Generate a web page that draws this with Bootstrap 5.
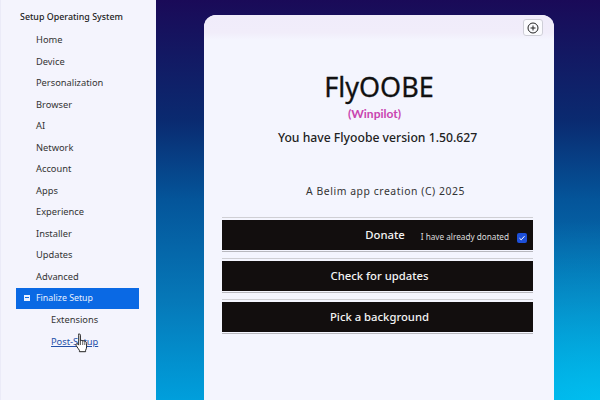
<!DOCTYPE html>
<html lang="en">
<head>
    <meta charset="UTF-8">
    <meta name="viewport" content="width=device-width, initial-scale=1.0">
    <title>FlyOOBE</title>
    <link href="https://cdn.jsdelivr.net/npm/bootstrap@5.3.0/dist/css/bootstrap.min.css" rel="stylesheet">
    <style>
    html, body {
        height: 400px;
        overflow: hidden;
    }
    body {
        font-family: "Noto Sans", "Open Sans", sans-serif;
        background: #f4f4fd;
    }
    .app-shell {
        height: 400px;
    }
    .side-pane {
        width: 156px;
        background: #f4f4fd;
        padding: 10px 0 0 5px;
        border-left: 1px solid #ebebf8;
        font-size: 9.3px;
        color: #333;
    }
    .side-title {
        height: 13px;
        line-height: 13px;
        margin: 0 0 6px 14px;
        font-size: 8.9px;
        font-weight: 500;
        color: #222;
    }
    .side-item {
        height: 21.55px;
        line-height: 21.55px;
        padding-left: 30px;
        color: #333;
    }
    .side-active {
        width: 123px;
        margin-left: 10px;
        padding-left: 20px;
        height: 21px;
        line-height: 20px;
        font-size: 8.8px;
        background: #0a69e4;
        color: #e8f0ff;
        position: relative;
    }
    .side-minus {
        position: absolute;
        left: 8px;
        top: 7px;
        width: 6px;
        height: 6px;
        background: #e8f0ff;
    }
    .side-minus::after {
        content: "";
        position: absolute;
        left: 1px;
        right: 1px;
        top: 2px;
        height: 1px;
        background: #0a69e4;
    }
    .side-sub {
        padding-left: 45px;
        margin-top: 0.5px;
    }
    .side-link {
        color: #2450a8;
        text-decoration: underline;
    }
    .hand-cursor {
        position: absolute;
        left: 75px;
        top: 333px;
    }
    .wall {
        background:
            radial-gradient(ellipse 70% 45% at 100% 100%, rgba(0, 215, 255, .55), rgba(0, 215, 255, 0)),
            linear-gradient(180deg, #1a0a58 0%, #0a2a70 30%, #04559a 50%, #0678b8 75%, #009fdc 100%);
        padding: 15px 46px 0 48px;
    }
    .about-card {
        height: 400px;
        background: #f4f5fe;
        border-radius: 12px 12px 0 0;
        border: 0;
        position: relative;
        overflow: hidden;
    }
    .about-head {
        height: 25px;
        background: linear-gradient(180deg, #f0ecfa 0%, #f1edfa 70%, #f4f5fe 100%);
    }
    .plus-btn {
        position: absolute;
        top: 4px;
        right: 11px;
        width: 20px;
        height: 17px;
        background: #fbfbfe;
        border: 1px solid #cfcfd8;
        border-radius: 3px;
    }
    .app-name {
        font-size: 27px;
        line-height: 32px;
        margin: 31px 0 0;
        font-weight: 400;
        color: #111;
        -webkit-text-stroke: 0.3px #111;
    }
    .app-tag {
        font-family: "Lato", sans-serif;
        font-size: 12px;
        line-height: 16px;
        margin: 3px 9px 0 0;
        color: #c944b0;
        font-weight: 700;
    }
    .app-version {
        font-size: 12.200px;
        line-height: 16px;
        margin: 8px 3px 0 0;
        font-weight: 500;
        color: #222;
    }
    .app-credit {
        font-size: 10.400px;
        letter-spacing: 0.55px;
        line-height: 14px;
        margin: 38px 0 0 13px;
        color: #333;
    }
    .action-stack {
        margin: 19px 21px 0 18px;
    }
    .action-bar {
        position: relative;
        display: block;
        width: 100%;
        height: 35px;
        margin-bottom: 6px;
        padding: 2px 0 1px;
        border-top: 1px solid #cfcfd4;
        border-bottom: 1px solid #b8b8be;
        border-left: 0;
        border-right: 0;
        border-radius: 0;
        background: #f4f5fe;
        color: #f4f4f4;
        font-size: 11.300px;
        font-weight: 500;
    }
    .action-fill {
        display: block;
        height: 100%;
        line-height: 29px;
        padding-left: 4px;
        background: #120e0e;
    }
    .donate-label {
        margin-left: 11px;
    }
    .donate-side {
        position: absolute;
        right: 6px;
        top: 5px;
        height: 29px;
        font-size: 8.200px;
        font-weight: 400;
        color: #ddd;
    }
    .check-tick {
        width: 10px;
        height: 10px;
        background: #1d4fd8;
        border-radius: 2px;
    }
    </style>
</head>
<body>
    <div class="app-shell d-flex">
        <div class="side-pane flex-shrink-0">
            <div class="side-title">Setup Operating System</div>
            <div class="side-item">Home</div>
            <div class="side-item">Device</div>
            <div class="side-item">Personalization</div>
            <div class="side-item">Browser</div>
            <div class="side-item">AI</div>
            <div class="side-item">Network</div>
            <div class="side-item">Account</div>
            <div class="side-item">Apps</div>
            <div class="side-item">Experience</div>
            <div class="side-item">Installer</div>
            <div class="side-item">Updates</div>
            <div class="side-item">Advanced</div>
            <div class="side-active"><span class="side-minus"></span>Finalize Setup</div>
            <div class="side-item side-sub">Extensions</div>
            <div class="side-item side-sub"><span class="side-link">Post-Setup</span></div>
        </div>
        <svg class="hand-cursor" width="13" height="20" viewBox="0 0 13 20">
            <path d="M3.5 1.2c.9-.6 1.9 0 1.9 1v5.6l1.2-.4 1.3.3 1.2.2 1.3.6c.9.4 1.2 1 1.2 2v3.4c0 1.5-.5 2.3-1 3.4v1.4H4.400v-1.400c-.8-1.300-2-2.700-3.100-4.500-.5-.9-.4-1.700.3-2 .7-.2 1.200.2 2.100 1.300V2.200c0-.4 0-.8.300-1z" fill="#fff" stroke="#222" stroke-width="1"/>
            <path d="M5.500 8v4M7.700 8v4M9.800 8.500V12" stroke="#222" stroke-width=".7" fill="none"/>
        </svg>
        <div class="wall flex-grow-1">
            <div class="about-card text-center">
                <div class="about-head"></div>
                <button type="button" class="plus-btn d-flex align-items-center justify-content-center p-0" aria-label="Expand">
                    <svg width="12" height="12" viewBox="0 0 12 12">
                        <circle cx="6" cy="6" r="5" fill="none" stroke="#222" stroke-width="1"/>
                        <path d="M3.500 6h5M6 3.500v5" fill="none" stroke="#222" stroke-width="1"/>
                    </svg>
                </button>
                <h1 class="app-name">FlyOOBE</h1>
                <div class="app-tag">(Winpilot)</div>
                <div class="app-version">You have Flyoobe version 1.50.627</div>
                <div class="app-credit">A Belim app creation (C) 2025</div>
                <div class="action-stack">
                    <div class="action-bar">
                        <span class="action-fill"><span class="donate-label">Donate</span></span>
                        <span class="donate-side d-flex align-items-center gap-2">I have already donated
                            <span class="check-tick d-flex align-items-center justify-content-center">
                                <svg width="8" height="8" viewBox="0 0 8 8"><path d="M1.500 4.200 3.200 5.800 6.500 2.200" fill="none" stroke="#fff" stroke-width="1"/></svg>
                            </span>
                        </span>
                    </div>
                    <div class="action-bar"><span class="action-fill">Check for updates</span></div>
                    <div class="action-bar"><span class="action-fill">Pick a background</span></div>
                </div>
            </div>
        </div>
    </div>
    <script src="https://cdn.jsdelivr.net/npm/bootstrap@5.3.0/dist/js/bootstrap.bundle.min.js"></script>
</body>
</html>
